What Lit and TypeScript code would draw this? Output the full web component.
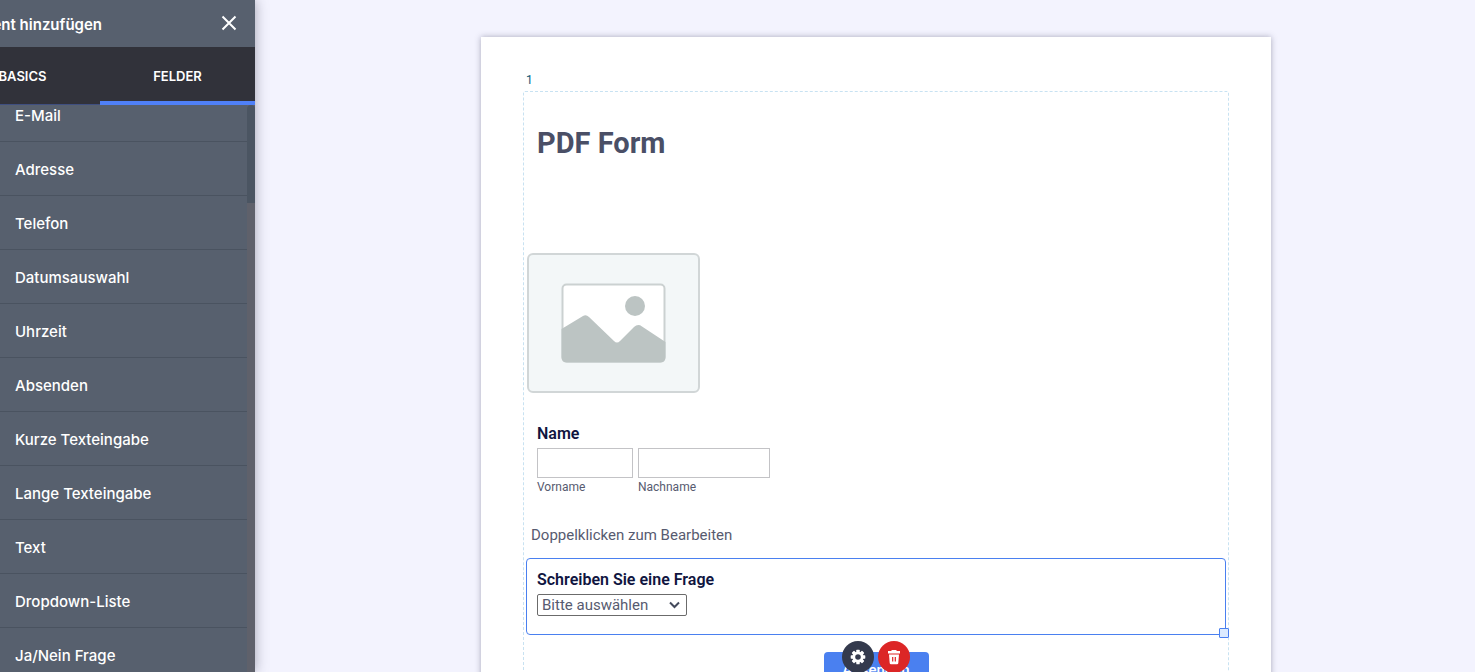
import { LitElement, html, css, svg } from "lit";
import { customElement, property, state } from "lit/decorators.js";
import { classMap } from "lit/directives/class-map.js";

@customElement("element-panel")
class ElementPanel extends LitElement {
  static styles = css`
    :host {
      display: flex;
      justify-content: flex-end;
      flex: none;
      width: 255px;
      height: 100%;
      color: #fff;
      font-family: Inter, "Liberation Sans", sans-serif;
    }
    .panel {
      flex: none;
      display: flex;
      flex-direction: column;
      width: 310px;
      background: #57606e;
    }
    .head {
      flex: none;
      display: flex;
      align-items: center;
      height: 47px;
      padding-right: 14px;
      justify-content: space-between;
    }
    .title {
      display: flex;
      justify-content: flex-end;
      width: 157px;
      margin: 0;
      padding-top: 2px;
      font-size: 15px;
      line-height: 20px;
      font-weight: 600;
      white-space: nowrap;
    }
    .close {
      display: flex;
      margin-bottom: 2px;
      padding: 4px;
      border: 0;
      background: none;
      color: inherit;
    }
    .tabs {
      flex: none;
      display: grid;
      grid-template-columns: 1fr 1fr;
      height: 58px;
      background: #31323a;
    }
    .tab {
      border: 0;
      border-bottom: 1px solid #3f4f80;
      padding: 0;
      background: none;
      color: inherit;
      font: 600 13px/20px Inter, "Liberation Sans", sans-serif;
    }
    .tab.active {
      border-bottom: 4px solid #4f80f7;
      padding-top: 3px;
    }
    .body {
      flex: 1;
      min-height: 0;
      display: flex;
      overflow: hidden;
    }
    .list {
      flex: 1;
      list-style: none;
      margin: -17px 0 0;
      padding: 0;
    }
    .item {
      display: block;
      box-sizing: border-box;
      width: 100%;
      height: 54px;
      border: 0;
      border-bottom: 1px solid #4a5360;
      padding: 2px 0 0 70px;
      background: none;
      color: inherit;
      text-align: left;
      font: 500 15px/20px Inter, "Liberation Sans", sans-serif;
    }
    .track {
      width: 8px;
      background: #5f616b;
    }
    .thumb {
      height: 98px;
      background: #4b5562;
      border-radius: 4px 4px 0 0;
    }
  `;

  @state() active = "FELDER";

  items = [
    "E-Mail", "Adresse", "Telefon", "Datumsauswahl", "Uhrzeit", "Absenden",
    "Kurze Texteingabe", "Lange Texteingabe", "Text", "Dropdown-Liste", "Ja/Nein Frage",
  ];

  render() {
    return html`
      <div class="panel">
        <div class="head">
          <h2 class="title">Formularelement hinzufügen</h2>
          <button class="close" aria-label="Schließen">
            <svg width="16" height="16" viewBox="0 0 16 16" fill="none" stroke="currentColor" stroke-width="2">
              <path d="M1.5 1.5 14.5 14.5M14.5 1.5 1.5 14.5" />
            </svg>
          </button>
        </div>
        <div class="tabs">
          ${["BASICS", "FELDER"].map(
            (t) => html`<button
              class=${classMap({ tab: true, active: t === this.active })}
              @click=${() => (this.active = t)}
            >${t}</button>`
          )}
        </div>
        <div class="body">
          <ul class="list">
            ${this.items.map((i) => html`<li><button class="item">${i}</button></li>`)}
          </ul>
          <div class="track"><div class="thumb"></div></div>
        </div>
      </div>
    `;
  }
}

@customElement("form-sheet")
class FormSheet extends LitElement {
  static styles = css`
    :host {
      display: block;
      box-sizing: border-box;
      width: 100%;
      max-width: 790px;
      margin: 37px auto 0;
      padding: 35px 42px 42px;
      background: #fff;
      box-shadow: 0 0 6px rgba(60, 60, 90, 0.4);
      color: #575b70;
      font-family: Roboto, sans-serif;
    }
    .number {
      padding: 0 3px 3px;
      color: #0a5a78;
      font-size: 12px;
      line-height: 16px;
    }
    .area {
      border: 1px dashed #c8e2f2;
      padding: 32px 2px 40px;
      border-radius: 2px;
    }
    .heading {
      margin: 0 0 91px 11px;
      color: #4a4f66;
      font-size: 29px;
      line-height: 38px;
      font-weight: 700;
    }
    .picture {
      display: block;
      margin: 0 1px 29px;
    }
    .name {
      margin: 0 0 27px;
      padding: 0 11px;
      border: 0;
    }
    .label {
      display: block;
      padding: 0;
      color: #10153f;
      font-size: 16px;
      line-height: 24px;
      font-weight: 600;
    }
    .row {
      display: flex;
      gap: 5px;
      padding-top: 2px;
    }
    .part {
      display: flex;
      flex-direction: column;
    }
    .box {
      box-sizing: border-box;
      height: 30px;
      border: 1px solid #c3c3c6;
      padding: 0 6px;
      background: #fff;
    }
    .first {
      width: 96px;
    }
    .last {
      width: 132px;
    }
    .sub {
      font-size: 12px;
      line-height: 18px;
    }
    .hint {
      margin: 0 5px 11px;
      font-size: 15px;
      line-height: 24px;
    }
    .question {
      position: relative;
      border: 1px solid #4a80f0;
      border-radius: 4px;
      padding: 9px 10px 18px;
      margin-bottom: 17px;
    }
    .picker {
      display: grid;
      width: 150px;
      margin-top: 2px;
      align-items: center;
    }
    .choice,
    .arrow {
      grid-area: 1 / 1;
    }
    .arrow {
      justify-self: end;
      margin-right: 7px;
      pointer-events: none;
    }
    .choice {
      appearance: none;
      box-sizing: border-box;
      width: 100%;
      height: 22px;
      margin: 0;
      padding: 0 4px;
      border: 1px solid #6b6b6b;
      border-radius: 2px;
      background: #fff;
      color: #575b70;
      font: 400 15px/20px Roboto, sans-serif;
    }
    .handle {
      position: absolute;
      right: -4px;
      bottom: -4px;
      box-sizing: border-box;
      width: 10px;
      height: 10px;
      border: 1px solid #4a80f0;
      border-radius: 1px;
      background: #dcebff;
    }
    .tools {
      position: absolute;
      top: 100%;
      left: 0;
      right: 0;
      display: flex;
      justify-content: center;
      gap: 4px;
      padding-top: 7px;
    }
    .tool {
      display: flex;
      align-items: center;
      justify-content: center;
      width: 32px;
      height: 32px;
      border: 0;
      border-radius: 50%;
      padding: 0;
      background: #343a4d;
    }
    .tool.delete {
      background: #dc2626;
    }
    .submit {
      display: block;
      margin: 0 auto;
      width: 105px;
      height: 36px;
      border: 0;
      border-radius: 4px;
      padding: 0;
      background: #4a80f0;
      color: #fff;
      font: 500 15px/20px Roboto, sans-serif;
    }
  `;

  @property({ type: Number }) page = 1;

  render() {
    const teeth = [0, 45, 90, 135, 180, 225, 270, 315];
    return html`
      <div class="number">${this.page}</div>
      <div class="area">
        <h1 class="heading">PDF Form</h1>
        <svg class="picture" width="173" height="140" viewBox="0 0 173 140" role="img" aria-label="Bild">
          <rect x="1" y="1" width="171" height="138" rx="5" fill="#f3f7f8" stroke="#d1d6d7" stroke-width="2" />
          <rect x="35.5" y="31.5" width="102" height="77" rx="4" fill="#fff" stroke="#cbd1d1" stroke-width="2" />
          <circle cx="108" cy="53" r="10" fill="#bcc4c3" />
          <path
            d="M34.5 76 56 63Q59 61 62 64L87 88Q90 91 93 88L107 74Q111 70.5 115 73.5L138.5 89V104Q138.5 109.5 133 109.5H40Q34.5 109.5 34.5 104Z"
            fill="#bcc4c3"
          />
        </svg>
        <fieldset class="name">
          <legend class="label">Name</legend>
          <div class="row">
            <div class="part">
              <input class="box first" id="first" type="text" />
              <label class="sub" for="first">Vorname</label>
            </div>
            <div class="part">
              <input class="box last" id="last" type="text" />
              <label class="sub" for="last">Nachname</label>
            </div>
          </div>
        </fieldset>
        <p class="hint">Doppelklicken zum Bearbeiten</p>
        <div class="question">
          <label class="label" for="choice">Schreiben Sie eine Frage</label>
          <div class="picker">
            <select class="choice" id="choice">
              <option>Bitte auswählen</option>
            </select>
            <svg class="arrow" width="11" height="8" viewBox="0 0 11 8" fill="none" stroke="#444a5c" stroke-width="2">
              <path d="M1 1.5 5.5 6 10 1.5" />
            </svg>
          </div>
          <span class="handle"></span>
          <div class="tools">
            <button class="tool" aria-label="Eigenschaften">
              <svg width="16" height="16" viewBox="-8 -8 16 16">
                ${teeth.map((a) => svg`<rect x="-1.7" y="-7.3" width="3.4" height="4" rx="0.6" fill="#fff" transform="rotate(${a})" />`)}
                <circle r="4.2" fill="none" stroke="#fff" stroke-width="2.8" />
              </svg>
            </button>
            <button class="tool delete" aria-label="Löschen">
              <svg width="16" height="16" viewBox="0 0 16 16">
                <path d="M5.5 1h5v1H14v2.5H2V2h3.5Z" fill="#fff" />
                <path d="M3 5.5h10L12.3 14q-.1 1.2-1.3 1.2H5q-1.2 0-1.3-1.2Z" fill="#fff" />
                <path d="M6.7 8v4.5M9.3 8v4.5" stroke="#dc2626" stroke-width="1.2" />
              </svg>
            </button>
          </div>
        </div>
        <button class="submit">Absenden</button>
      </div>
    `;
  }
}

@customElement("app-root")
class AppRoot extends LitElement {
  static styles = css`
    :host {
      display: flex;
      height: 100vh;
      overflow: hidden;
      background: #f3f3fe;
    }
    .side {
      position: relative;
      z-index: 1;
      box-shadow: 0 0 12px rgba(40, 40, 60, 0.4);
    }
    .stage {
      flex: 1;
      min-width: 0;
      padding-left: 22px;
      overflow: hidden;
    }
  `;

  render() {
    return html`
      <element-panel class="side"></element-panel>
      <main class="stage"><form-sheet page="1"></form-sheet></main>
    `;
  }
}
